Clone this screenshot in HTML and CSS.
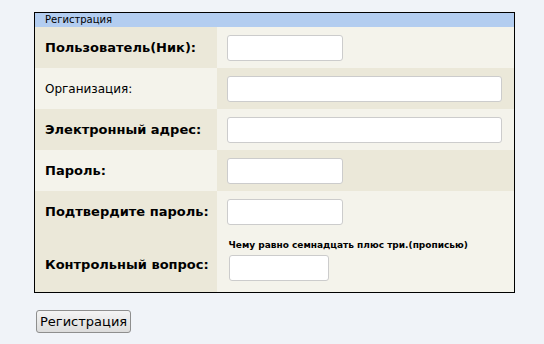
FILE: index.html
```html
<!DOCTYPE html>
<html lang="ru">
<head>
  <meta charset="UTF-8" />
  <title>Регистрация</title>
  <link rel="stylesheet" href="styles.css">
</head>
<body>
  <form class="reg-form">
    <table class="reg-table">
      <tr class="caption-row">
        <td colspan="2">Регистрация</td>
      </tr>
      <tr class="row-a">
        <td class="label"><b>Пользователь(Ник):</b></td>
        <td class="field"><input type="text" class="short"></td>
      </tr>
      <tr class="row-b">
        <td class="label plain">Организация:</td>
        <td class="field"><input type="text" class="wide"></td>
      </tr>
      <tr class="row-a">
        <td class="label"><b>Электронный адрес:</b></td>
        <td class="field"><input type="text" class="wide"></td>
      </tr>
      <tr class="row-b">
        <td class="label"><b>Пароль:</b></td>
        <td class="field"><input type="password" class="short"></td>
      </tr>
      <tr class="row-a">
        <td class="label"><b>Подтвердите пароль:</b></td>
        <td class="field"><input type="password" class="short"></td>
      </tr>
      <tr class="row-a tall">
        <td class="label"><b>Контрольный вопрос:</b></td>
        <td class="field question">
          <div class="hint">Чему равно семнадцать плюс три.(прописью)</div>
          <input type="text" class="answer">
        </td>
      </tr>
    </table>
    <button type="button" class="submit">Регистрация</button>
  </form>
</body>
</html>
```

FILE: styles.css
```css
* {
  box-sizing: border-box;
}

body {
  margin: 0;
  padding: 12px 0 0 34px;
  background-color: #f0f3f8;
  font-family: 'DejaVu Sans', Verdana, sans-serif;
  color: #000;
}

.reg-table {
  width: 481px;
  border: 1px solid #000;
  border-collapse: collapse;
}

.reg-table td {
  padding: 0;
}

.caption-row td {
  height: 14px;
  background-color: #b3cdf0;
  font-size: 10px;
  padding-left: 10px;
  line-height: 14px;
}

.row-a .label,
.row-b .field {
  background-color: #ebe8d9;
}

.row-b .label,
.row-a .field {
  background-color: #f4f3eb;
}

.label {
  width: 182px;
  height: 41px;
  padding-left: 10px !important;
  font-size: 13px;
  vertical-align: middle;
}

.label.plain {
  font-size: 12px;
}

.tall .label {
  height: 60px;
  padding-top: 6px !important;
}

.field {
  padding-left: 10px !important;
  vertical-align: middle;
}

input {
  height: 26px;
  border: 1px solid #cccccc;
  border-radius: 3px;
  background: #fff;
  display: block;
}

input.short {
  width: 116px;
}

input.wide {
  width: 275px;
}

.field.question {
  vertical-align: top;
  padding-top: 7px !important;
}

.hint {
  font-size: 9px;
  line-height: 12px;
  font-weight: bold;
  margin: 0 0 4px 2px;
}

input.answer {
  width: 100px;
  margin-left: 2px;
}

.submit {
  margin: 17px 0 0 2px;
  height: 23px;
  padding: 0 3px;
  font-family: 'DejaVu Sans', Verdana, sans-serif;
  font-size: 13px;
  border: 1px solid #8e8e8e;
  border-radius: 3px;
  background: linear-gradient(#f4f4f4, #dcdcdc);
}
```
